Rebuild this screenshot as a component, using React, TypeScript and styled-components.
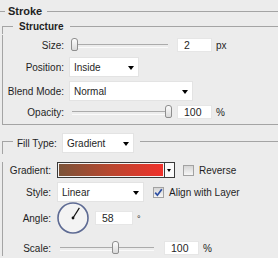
import styled, { createGlobalStyle } from 'styled-components';

const GlobalStyle = createGlobalStyle`
  * { box-sizing: border-box; }
  body {
    margin: 0;
    background: #ececec;
    overflow: hidden;
    font-family: "Liberation Sans", Arial, sans-serif;
    font-size: 10px;
    color: #1f1f1f;
  }
`;

const LINE = '#a4a4a4';

const Panel = styled.div`
  padding-top: 4px;
`;

const Header = styled.div`
  display: flex;
  align-items: center;
  height: 14px;
  font-size: 11px;
  font-weight: bold;

  &::before {
    content: "";
    width: 5px;
    margin-right: 3px;
    border-top: 1px solid ${LINE};
  }
  &::after {
    content: "";
    flex: 1;
    margin-left: 5px;
    border-top: 1px solid ${LINE};
  }
`;

const Group = styled.div<{ $mt: number }>`
  margin: ${p => p.$mt}px 0 0 2px;
`;

const GroupHead = styled.div<{ $h: number; $line: number; $gapL: number; $gapR: number }>`
  display: flex;
  align-items: center;
  height: ${p => p.$h}px;

  &::before {
    content: "";
    align-self: flex-start;
    margin-top: ${p => p.$line}px;
    height: ${p => p.$h - p.$line}px;
    width: 10px;
    margin-right: ${p => p.$gapL}px;
    border-top: 1px solid ${LINE};
    border-left: 1px solid ${LINE};
  }
  &::after {
    content: "";
    align-self: flex-start;
    margin-top: ${p => p.$line}px;
    flex: 1;
    margin-left: ${p => p.$gapR}px;
    border-top: 1px solid ${LINE};
  }
`;

const GroupTitle = styled.span`
  font-weight: bold;
`;

const GroupBody = styled.div<{ $closed?: boolean }>`
  border-left: 1px solid ${LINE};
  border-bottom: ${p => (p.$closed ? `1px solid ${LINE}` : 'none')};
  padding-bottom: ${p => (p.$closed ? 2 : 0)}px;
`;

const Row = styled.div<{ $mt: number; $h?: number }>`
  display: flex;
  align-items: center;
  height: ${p => p.$h ?? 20}px;
  margin-top: ${p => p.$mt}px;
`;

const Label = styled.span<{ $w: number; $gap: number }>`
  flex: none;
  width: ${p => p.$w}px;
  margin-right: ${p => p.$gap}px;
  text-align: right;
  white-space: nowrap;
`;

const Select = styled.div<{ $w: number }>`
  position: relative;
  flex: none;
  display: flex;
  align-items: center;
  width: ${p => p.$w}px;
  height: 20px;
  padding-left: 4px;
  background: #fff;
  border: 1px solid #e3e3e3;

  &::after {
    content: "";
    position: absolute;
    right: 4px;
    top: 8px;
    border-left: 3.5px solid transparent;
    border-right: 3.5px solid transparent;
    border-top: 4px solid #000;
  }
`;

const Slider = styled.div<{ $w: number }>`
  position: relative;
  flex: none;
  width: ${p => p.$w}px;
  height: 14px;

  &::before {
    content: "";
    position: absolute;
    left: 3px;
    right: 4px;
    top: 6px;
    height: 2px;
    border-top: 1px solid #ababab;
    border-bottom: 1px solid #fafafa;
  }
`;

const Thumb = styled.span`
  position: absolute;
  top: 0;
  width: 7px;
  height: 13px;
  border: 1px solid #8e8e8e;
  border-radius: 3px 3px 2px 2px;
  background: linear-gradient(#fdfdfd, #dadada);
`;

const NumField = styled.div<{ $w: number; $ml: number }>`
  flex: none;
  width: ${p => p.$w}px;
  height: 14px;
  margin-left: ${p => p.$ml}px;
  padding-left: 6px;
  background: #fff;
  border: 1px solid #e6e6e6;
  font-size: 10.5px;
  line-height: 12px;
`;

const Unit = styled.span<{ $raise?: boolean }>`
  margin-left: 4px;
  font-size: ${p => (p.$raise ? 9 : 10)}px;
  align-self: ${p => (p.$raise ? 'flex-start' : 'center')};
  margin-top: ${p => (p.$raise ? 12 : 0)}px;
`;

const GradientPicker = styled.div`
  flex: none;
  display: flex;
  width: 118px;
  height: 16px;
  border: 1px solid #3a3a3a;
`;

const GradientBar = styled.div`
  flex: 1;
  border: 1px solid #f4f4f4;
  background: linear-gradient(90deg, #7b5338, #b9472f 50%, #f0312b);
`;

const GradientButton = styled.div`
  position: relative;
  width: 10px;
  border-left: 1px solid #3a3a3a;
  background: #fafafa;

  &::after {
    content: "";
    position: absolute;
    left: 2px;
    top: 6px;
    border-left: 2.5px solid transparent;
    border-right: 2.5px solid transparent;
    border-top: 3px solid #000;
  }
`;

const CheckItem = styled.label<{ $ml: number }>`
  display: flex;
  align-items: center;
  gap: 5px;
  margin-left: ${p => p.$ml}px;
`;

const CheckBox = styled.span`
  display: flex;
  align-items: center;
  justify-content: center;
  width: 11px;
  height: 11px;
  border: 1px solid #a2a2a2;
  background: linear-gradient(#d6d6d6, #f6f6f6);
`;

const DialBox = styled.svg`
  flex: none;
  display: block;
`;

const Check = () => (
  <svg width="9" height="9" viewBox="0 0 9 9">
    <path d="M1.2 4.6 L3.4 7.2 L7.8 1.2" fill="none" stroke="#2c4ea3" strokeWidth="1.7" />
  </svg>
);

const SliderField = ({ width, pos }: { width: number; pos: number }) => (
  <Slider $w={width}>
    <Thumb style={{ left: 2 + pos * (width - 9) }} />
  </Slider>
);

const AngleDial = ({ angle }: { angle: number }) => {
  const r = 12;
  const rad = (angle * Math.PI) / 180;
  const cx = 16;
  const cy = 16;
  return (
    <DialBox width="32" height="32" viewBox="0 0 32 32">
      <circle cx={cx} cy={cy} r={15} fill="#f3f3f3" stroke="#5d6a93" strokeWidth="1.6" />
      <line x1={cx} y1={cy} x2={cx + r * Math.cos(rad)} y2={cy - r * Math.sin(rad)} stroke="#111" strokeWidth="1.2" />
      <circle cx={cx} cy={cy} r={1.4} fill="#111" />
    </DialBox>
  );
};

export default function App() {
  return (
    <>
      <GlobalStyle />
      <Panel>
        <Header>Stroke</Header>

        <Group $mt={1}>
          <GroupHead $h={14} $line={7} $gapL={6} $gapR={7}>
            <GroupTitle>Structure</GroupTitle>
          </GroupHead>
          <GroupBody $closed>
            <Row $mt={2}>
              <Label $w={61} $gap={5}>Size:</Label>
              <SliderField width={103} pos={0} />
              <NumField $w={35} $ml={5}>2</NumField>
              <Unit>px</Unit>
            </Row>
            <Row $mt={2}>
              <Label $w={61} $gap={5}>Position:</Label>
              <Select $w={70}>Inside</Select>
            </Row>
            <Row $mt={4}>
              <Label $w={61} $gap={5}>Blend Mode:</Label>
              <Select $w={124}>Normal</Select>
            </Row>
            <Row $mt={1}>
              <Label $w={61} $gap={5}>Opacity:</Label>
              <SliderField width={103} pos={1} />
              <NumField $w={35} $ml={5}>100</NumField>
              <Unit>%</Unit>
            </Row>
          </GroupBody>
        </Group>

        <Group $mt={8}>
          <GroupHead $h={20} $line={8} $gapL={4} $gapR={6}>
            <Label $w={38} $gap={7} as="span">Fill Type:</Label>
            <Select $w={72}>Gradient</Select>
          </GroupHead>
          <GroupBody>
            <Row $mt={9} $h={16}>
              <Label $w={48} $gap={6}>Gradient:</Label>
              <GradientPicker>
                <GradientBar />
                <GradientButton />
              </GradientPicker>
              <CheckItem $ml={8}>
                <CheckBox />
                Reverse
              </CheckItem>
            </Row>
            <Row $mt={4}>
              <Label $w={48} $gap={6}>Style:</Label>
              <Select $w={87}>Linear</Select>
              <CheckItem $ml={9}>
                <CheckBox>
                  <Check />
                </CheckBox>
                Align with Layer
              </CheckItem>
            </Row>
            <Row $mt={0} $h={32}>
              <Label $w={48} $gap={6}>Angle:</Label>
              <AngleDial angle={58} />
              <NumField $w={38} $ml={6}>58</NumField>
              <Unit $raise>°</Unit>
            </Row>
            <Row $mt={6} $h={16}>
              <Label $w={48} $gap={6}>Scale:</Label>
              <SliderField width={101} pos={0.58} />
              <NumField $w={35} $ml={6}>100</NumField>
              <Unit>%</Unit>
            </Row>
          </GroupBody>
        </Group>
      </Panel>
    </>
  );
}
